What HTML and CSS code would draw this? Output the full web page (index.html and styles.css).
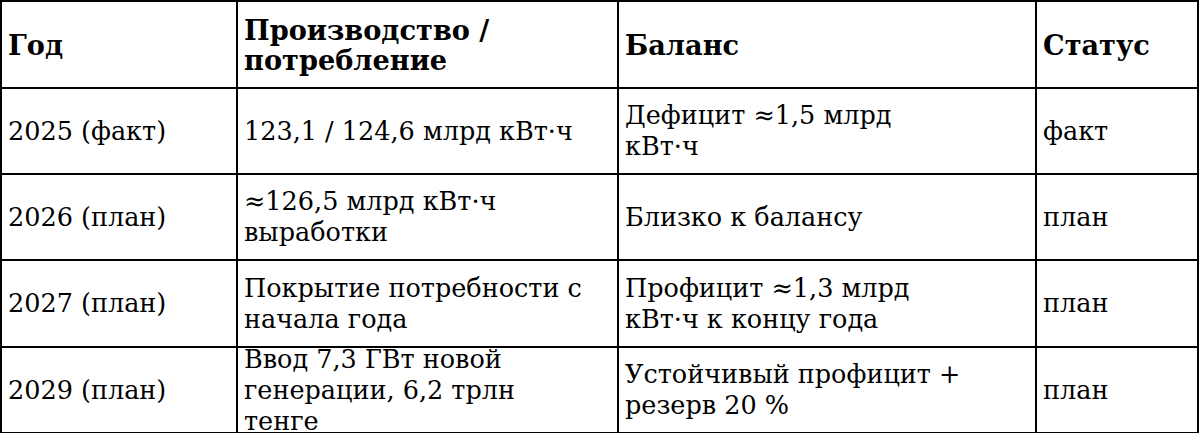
FILE: index.html
```html
<!DOCTYPE html>
<html lang="ru">
<head>
<meta charset="utf-8">
<link rel="stylesheet" href="styles.css">
</head>
<body>
<div class="table">
  <div class="cell head"><span>Год</span></div>
  <div class="cell head"><span>Производство / потребление</span></div>
  <div class="cell head"><span>Баланс</span></div>
  <div class="cell head"><span>Статус</span></div>

  <div class="cell"><span>2025 (факт)</span></div>
  <div class="cell"><span>123,1 / 124,6 млрд кВт·ч</span></div>
  <div class="cell"><span>Дефицит ≈1,5 млрд кВт·ч</span></div>
  <div class="cell"><span>факт</span></div>

  <div class="cell"><span>2026 (план)</span></div>
  <div class="cell"><span>≈126,5 млрд кВт·ч выработки</span></div>
  <div class="cell"><span>Близко к балансу</span></div>
  <div class="cell"><span>план</span></div>

  <div class="cell"><span>2027 (план)</span></div>
  <div class="cell"><span>Покрытие потребности с начала года</span></div>
  <div class="cell"><span>Профицит ≈1,3 млрд кВт·ч к концу года</span></div>
  <div class="cell"><span>план</span></div>

  <div class="cell"><span>2029 (план)</span></div>
  <div class="cell"><span>Ввод 7,3 ГВт новой генерации, 6,2 трлн тенге</span></div>
  <div class="cell"><span>Устойчивый профицит + резерв 20 %</span></div>
  <div class="cell"><span>план</span></div>
</div>
</body>
</html>
```

FILE: styles.css
```css
html, body {
  margin: 0;
  padding: 0;
  background: #ffffff;
}
body {
  font-family: "DejaVu Serif", serif;
  font-size: 25.5px;
  line-height: 31px;
  color: #000;
}
.table {
  display: grid;
  width: 1199px;
  grid-template-columns: 234px 379px 416px 160px;
  grid-template-rows: 85px 84px 84px 85px 84px;
  gap: 2px;
  padding: 2px;
  box-sizing: border-box;
  background: #000;
  height: 433px;
}
.cell {
  background: #fff;
  display: flex;
  align-items: center;
  padding: 0 6px;
  min-height: 0;
  min-width: 0;
}
.cell span {
  display: block;
  max-width: 342px;
}
.head {
  font-weight: bold;
  font-size: 27.2px;
  line-height: 30px;
}
```
